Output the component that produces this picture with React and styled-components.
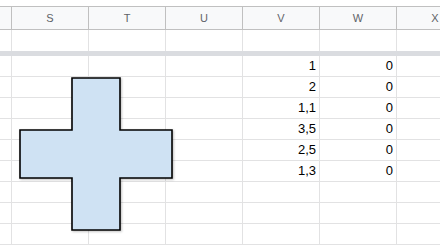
import styled, { createGlobalStyle } from 'styled-components';

const GlobalStyle = createGlobalStyle`
  html, body {
    margin: 0;
    padding: 0;
    background: #ffffff;
    overflow: hidden;
  }
`;

const COLS = ['R', 'S', 'T', 'U', 'V', 'W', 'X'];
const WIDTHS = [12, 77, 77, 77, 77, 77, 77];

const DATA = [
  ['1', '0'],
  ['2', '0'],
  ['1,1', '0'],
  ['3,5', '0'],
  ['2,5', '0'],
  ['1,3', '0'],
  ['', ''],
  ['', ''],
  ['', ''],
];

const Page = styled.div`
  position: relative;
  padding-top: 6px;
  width: 440px;
  height: 250px;
  overflow: hidden;
  font-family: 'Liberation Sans', Arial, sans-serif;
`;

const Row = styled.div`
  display: grid;
  grid-template-columns: ${WIDTHS.map((w) => `${w}px`).join(' ')};
  width: max-content;
  height: ${(props) => props.h}px;
  box-sizing: border-box;
  border-bottom: ${(props) => (props.line ? '1px solid #e2e2e3' : 'none')};
`;

const HeaderRow = styled(Row)`
  background: #f8f9fa;
  border-top: 1px solid #c0c0c0;
  border-bottom: 1px solid #c0c0c0;
`;

const HeadCell = styled.div`
  display: flex;
  align-items: center;
  justify-content: center;
  border-right: 1px solid #c0c0c0;
  font-size: 11px;
  color: #5f6368;
`;

const Cell = styled.div`
  border-right: 1px solid #e2e2e3;
  box-sizing: border-box;
  padding: 0 3px;
  font-size: 13px;
  line-height: 20px;
  text-align: right;
  color: #000000;
  white-space: nowrap;
  overflow: hidden;
`;

const FreezeBar = styled.div`
  height: 5px;
  width: 100%;
  background: #dadce0;
`;

const Drawing = styled.svg`
  position: absolute;
  left: 19px;
  top: 77px;
  overflow: visible;
  filter: drop-shadow(1px 1px 1px rgba(0, 0, 0, 0.25));
`;

function Cross() {
  const a = 52;
  const b = 100;
  const s = 152;
  const pts = [
    [a, 0], [b, 0], [b, a], [s, a], [s, b], [b, b],
    [b, s], [a, s], [a, b], [0, b], [0, a], [a, a],
  ]
    .map(([x, y]) => `${x + 1},${y + 1}`)
    .join(' ');
  return (
    <Drawing width="154" height="154" viewBox="0 0 154 154">
      <polygon points={pts} fill="#cfe2f3" stroke="#000" strokeWidth="1.6" />
    </Drawing>
  );
}

function DataRow({ values }) {
  return (
    <Row h={21} line>
      <Cell />
      <Cell />
      <Cell />
      <Cell />
      <Cell>{values[0]}</Cell>
      <Cell>{values[1]}</Cell>
      <Cell />
    </Row>
  );
}

export default function App() {
  return (
    <Page>
      <GlobalStyle />
      <HeaderRow h={24}>
        {COLS.map((c, i) => (
          <HeadCell key={c}>{i === 0 ? '' : c}</HeadCell>
        ))}
      </HeaderRow>
      <Row h={21}>
        {COLS.map((c) => (
          <Cell key={c} />
        ))}
      </Row>
      <FreezeBar />
      {DATA.map((values, i) => (
        <DataRow key={i} values={values} />
      ))}
      <Cross />
    </Page>
  );
}
